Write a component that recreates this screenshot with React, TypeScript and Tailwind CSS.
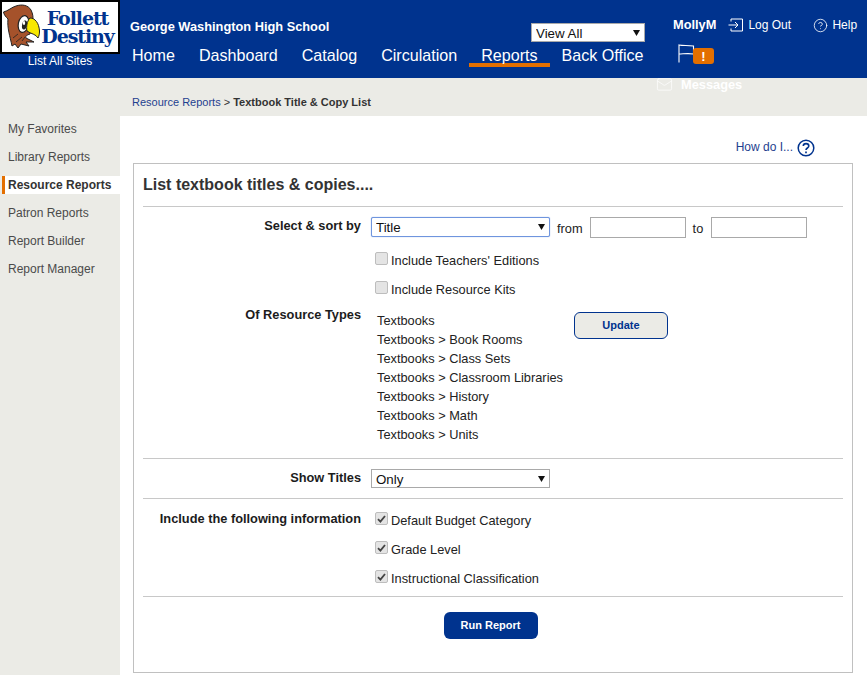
import React from "react";
import { CircleHelp, Mail } from "lucide-react";

const sans = "font-['Liberation_Sans',Arial,sans-serif]";

function Bird() {
  return (
    <svg width="38" height="46" viewBox="0 0 38 46" className="shrink-0">
      <path d="M0.5 8 C5 7 9 3 13 2 C19 0 25 1 28 6 C30 10 30 13 30 15 L27 30 C24 31 22 32 23 34 L31 38 L23 38 L26 42 L18 40 L15 44 L12 40 L9 42 C7 32 4 24 5 15 C3 13 1 11 0.5 8 Z" fill="#a5522b" stroke="#222" strokeWidth="1" />
      <ellipse cx="20.5" cy="20" rx="5.2" ry="8.5" fill="#fff" stroke="#222" strokeWidth="1.2" transform="rotate(12 20.5 20)" />
      <ellipse cx="21.5" cy="21" rx="2.4" ry="4.5" fill="#222" transform="rotate(12 21.5 21)" />
      <ellipse cx="21" cy="19" rx="1.2" ry="2" fill="#fff" />
      <path d="M27 14 C32 14 36 19 36.5 27 C36.5 30 36 32 35 34 C33 30 28 30 24 27 C23 23 24 17 27 14 Z" fill="#f8e800" stroke="#222" strokeWidth="1" />
      <path d="M10 34 L15 30 M13 38 L19 33 M19 37 L22 33" stroke="#222" strokeWidth="0.8" fill="none" />
    </svg>
  );
}

function Arrow() {
  return (
    <svg width="7" height="6" viewBox="0 0 7 6" className="absolute right-[5px] top-1/2 -translate-y-1/2 pointer-events-none">
      <path d="M0 0 H7 L3.5 6 Z" fill="#111" />
    </svg>
  );
}

function Select({ value, focused, className }: { value: string; focused?: boolean; className: string }) {
  return (
    <div className={`relative ${className}`}>
      <select
        defaultValue={value}
        className={`block h-full w-full appearance-none bg-white pl-[4px] text-[13.33px] text-[#111] outline-none border ${sans} ${focused ? "border-[#6f95de] rounded-[2px] shadow-[0_0_1px_#6f95de]" : "border-[#a9a9a9]"}`}
      >
        <option>{value}</option>
      </select>
      <Arrow />
    </div>
  );
}

function Check({ label, checked }: { label: string; checked?: boolean }) {
  return (
    <label className="flex h-[29px] items-start text-[12.8px] leading-[16px] text-[#222]">
      <span className="mt-[1px] ml-[4px] flex h-[13px] w-[13px] items-center justify-center rounded-[2px] border border-[#bdbdbd] bg-[#e4e4e4]">
        {checked && (
          <svg width="9" height="8" viewBox="0 0 9 8">
            <path d="M1 4.2 L3.4 6.6 L8 1" fill="none" stroke="#444" strokeWidth="1.8" />
          </svg>
        )}
      </span>
      <span className="ml-[3px] mt-[2px]">{label}</span>
    </label>
  );
}

const Rule = () => <hr className="border-0 border-t border-[#c8c8c8]" />;

const Label = ({ children }: { children: React.ReactNode }) => (
  <div className="w-[218px] shrink-0 whitespace-nowrap pt-[1px] text-right text-[12.8px] font-bold leading-[16px] text-[#1c1c1c]">{children}</div>
);

const navItems = ["Home", "Dashboard", "Catalog", "Circulation", "Reports", "Back Office"];
const sideItems = ["My Favorites", "Library Reports", "Resource Reports", "Patron Reports", "Report Builder", "Report Manager"];
const types = ["Textbooks", "Textbooks > Book Rooms", "Textbooks > Class Sets", "Textbooks > Classroom Libraries", "Textbooks > History", "Textbooks > Math", "Textbooks > Units"];

export default function App() {
  return (
    <div className={`h-[675px] w-[867px] overflow-hidden bg-white ${sans}`}>
      <header className="relative flex h-[78px] bg-[#00338e] text-white">
        <div className="w-[120px] shrink-0">
          <div className="flex h-[54px] items-center border-2 border-black bg-white pl-[1px]">
            <Bird />
            <div className="flex-1 pr-[4px] text-center font-['DejaVu_Serif',serif] text-[19px] font-bold leading-[18px] tracking-[-1.1px] text-[#00338e]">
              <div>Follett</div>
              <div>Destiny</div>
            </div>
          </div>
          <div className="text-center text-[12px] leading-[14px]">List All Sites</div>
        </div>

        <div className="w-[553px] shrink-0 pl-[10px] pr-[28px]">
          <div className="flex h-[42px] items-start justify-between">
            <div className="mt-[19px] text-[12.8px] font-bold leading-[16px]">George Washington High School</div>
            <Select value="View All" className="mt-[23px] h-[19px] w-[114px]" />
          </div>
          <nav className="mt-[2px] flex">
            {navItems.map((n) => (
              <a key={n} className={`block h-[23px] whitespace-nowrap px-[12px] text-[16.1px] leading-[22px] first:pl-[2px] ${n === "Reports" ? "border-b-[4px] border-[#e36f00]" : ""}`}>
                {n}
              </a>
            ))}
          </nav>
        </div>

        <div className="flex-1">
          <div className="flex items-center pt-[17px] text-[12px] leading-[16px]">
            <span className="text-[12.8px] font-bold">MollyM</span>
            <svg width="16" height="14" viewBox="0 0 16 14" fill="none" stroke="#fff" strokeWidth="1" className="ml-[12px]">
              <path d="M3 3.5 V1 H14.5 V13 H3 V10.5 M0.5 7 H9.5 M7 4 L10 7 L7 10" />
            </svg>
            <span className="ml-[4px] w-[65px]">Log Out</span>
            <CircleHelp size={15} strokeWidth={1.3} />
            <span className="ml-[4px]">Help</span>
          </div>
          <div className="relative mt-[11px] ml-[5px] h-[22px] w-[40px]">
            <svg width="17" height="19" viewBox="0 0 17 19" fill="none" stroke="#fff" strokeWidth="1.1">
              <path d="M1 18.5 V1 C5 2 10 1 15.5 2 V10 C10 9 5 10 1 10" />
            </svg>
            <span className="absolute left-[15px] top-[4px] flex h-[16px] w-[21px] items-center justify-center rounded-[3px] bg-[#e36f00] text-[13px] font-bold leading-none">!</span>
          </div>
        </div>

        <div className="absolute left-[656px] top-[77px] flex items-center text-[12.8px] font-bold text-white">
          <Mail size={17} strokeWidth={1} className="-mt-[1px]" />
          <span className="ml-[8px] leading-[14px]">Messages</span>
        </div>
      </header>

      <div className="flex h-[597px]">
        <aside className="w-[120px] shrink-0 bg-[#ebebe6] pt-[42px]">
          {sideItems.map((s) => {
            const active = s === "Resource Reports";
            return (
              <div
                key={s}
                className={`mb-[10px] ml-[2px] h-[18px] text-[12px] leading-[18px] ${
                  active ? "border-l-[3px] border-[#e36f00] bg-white pl-[3px] font-bold text-[#333]" : "pl-[6px] text-[#4a4a4a]"
                }`}
              >
                {s}
              </div>
            );
          })}
        </aside>

        <div className="flex-1">
          <div className="h-[38px] bg-[#ebebe6] pl-[12px] pt-[17px] text-[11px] leading-[14px] text-[#333]">
            <span className="text-[#1f3f8f]">Resource Reports</span> &gt; <b>Textbook Title &amp; Copy List</b>
          </div>
          <main className="pl-[13px] pr-[14px]">
            <div className="flex h-[47px] items-start justify-end pr-[38px] pt-[22px] text-[12px] leading-[18px] text-[#1f3f8f]">
              <span>How do I...</span>
              <svg width="18" height="18" viewBox="0 0 18 18" className="ml-[4px] mt-[1px]" fill="none" stroke="#00338e">
                <circle cx="9" cy="9" r="7.8" strokeWidth="1.5" />
                <path d="M6.3 7 C6.3 3.8 11.8 3.8 11.8 7 C11.8 9 9 9 9 11" strokeWidth="1.6" />
                <path d="M9 12.4 V14.2" strokeWidth="1.7" />
              </svg>
            </div>

            <section className="h-[510px] border border-[#c0c0c0] px-[9px]">
              <h1 className="pt-[11px] pb-[11px] text-[16px] font-bold leading-[20px] text-[#333]">List textbook titles &amp; copies....</h1>
              <Rule />

              <div className="flex pt-[10px]">
                <Label>Select &amp; sort by</Label>
                <div className="ml-[10px] text-[12.8px] text-[#222]">
                  <div className="flex h-[20px] items-start">
                    <Select value="Title" focused className="h-[20px] w-[179px]" />
                    <span className="ml-[7px] mt-[2px]">from</span>
                    <input className="ml-[7px] h-[21px] w-[96px] border border-[#a9a9a9]" />
                    <span className="ml-[7px] mt-[2px]">to</span>
                    <input className="ml-[8px] h-[21px] w-[96px] border border-[#a9a9a9]" />
                  </div>
                  <div className="mt-[14px] h-[55px]">
                    <Check label="Include Teachers' Editions" />
                    <Check label="Include Resource Kits" />
                  </div>
                </div>
              </div>

              <div className="flex h-[152px]">
                <Label>Of Resource Types</Label>
                <div className="ml-[16px] w-[197px] pt-[5px] text-[12.8px] leading-[19px] text-[#222]">
                  {types.map((t) => (
                    <div key={t}>{t}</div>
                  ))}
                </div>
                <button className="mt-[6px] h-[27px] w-[94px] rounded-[6px] border border-[#00338e] bg-[#ebebe6] text-[11px] font-bold text-[#00338e]">Update</button>
              </div>
              <Rule />

              <div className="flex h-[39px] pt-[10px]">
                <Label>Show Titles</Label>
                <Select value="Only" className="ml-[10px] h-[19px] w-[179px]" />
              </div>
              <Rule />

              <div className="flex h-[97px] pt-[11px]">
                <Label>Include the following information</Label>
                <div className="ml-[10px] pt-[1px]">
                  <Check checked label="Default Budget Category" />
                  <Check checked label="Grade Level" />
                  <Check checked label="Instructional Classification" />
                </div>
              </div>
              <Rule />

              <div className="flex justify-center pt-[15px] pr-[5px]">
                <button className="h-[27px] w-[94px] rounded-[6px] bg-[#00338e] text-[11px] font-bold text-white">Run Report</button>
              </div>
            </section>
          </main>
        </div>
      </div>
    </div>
  );
}
